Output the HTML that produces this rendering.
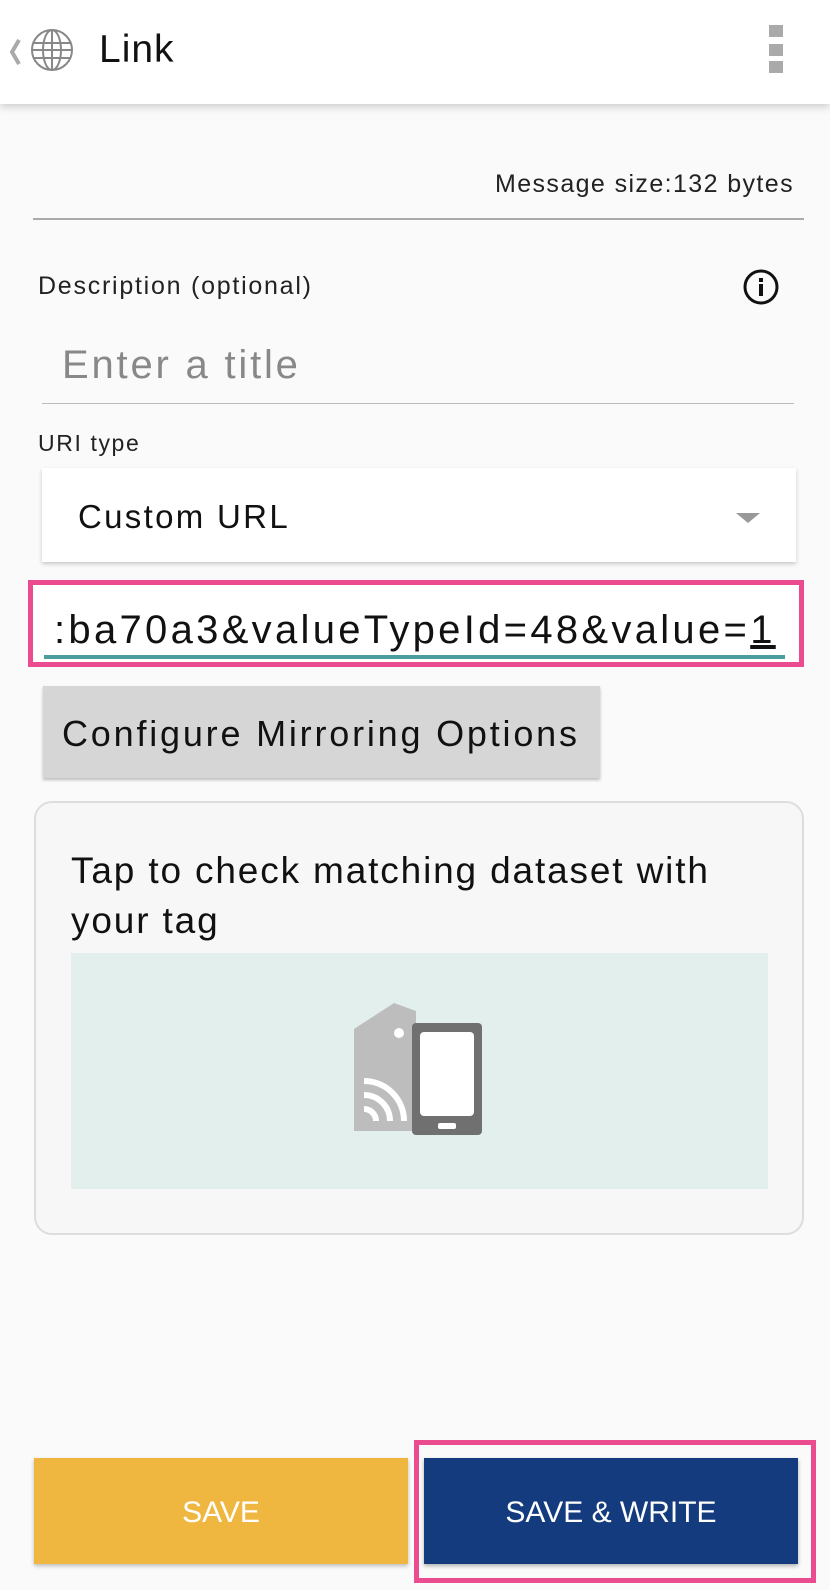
<!DOCTYPE html>
<html><head><style>
*{margin:0;padding:0;box-sizing:border-box}
body{width:830px;height:1590px;background:#fafafa;font-family:"Liberation Sans",sans-serif;position:relative;overflow:hidden;color:#1a1a1a}
.abs{position:absolute;white-space:nowrap}
.w{letter-spacing:0.07em}
</style></head><body>
<div class="abs" style="left:0;top:0;width:830px;height:104px;background:#fff;box-shadow:0 3px 8px rgba(0,0,0,0.18)"></div>
<svg class="abs" style="left:8px;top:38px" width="14" height="28" viewBox="0 0 14 28"><polyline points="11,2 4,14 11,26" fill="none" stroke="#aaa" stroke-width="4"/></svg>
<svg class="abs" style="left:30px;top:28px" width="44" height="44" viewBox="0 0 44 44" fill="none" stroke="#888" stroke-width="2"><circle cx="22" cy="22" r="20"/><ellipse cx="22" cy="22" rx="9" ry="20"/><line x1="22" y1="2" x2="22" y2="42"/><line x1="3" y1="15" x2="41" y2="15"/><line x1="2" y1="22" x2="42" y2="22"/><line x1="3" y1="30" x2="41" y2="30"/></svg>
<div class="abs" style="left:99px;top:28px;font-size:39px;color:#111;letter-spacing:1px">Link</div>
<div class="abs" style="left:769px;top:25px;width:14px;height:12px;background:#aaa"></div>
<div class="abs" style="left:769px;top:44px;width:14px;height:12px;background:#aaa"></div>
<div class="abs" style="left:769px;top:61px;width:14px;height:12px;background:#aaa"></div>

<div class="abs" style="right:36px;top:170px;font-size:25px;color:#222;letter-spacing:1.4px">Message size:132 bytes</div>
<div class="abs" style="left:33px;top:218px;width:771px;height:2px;background:#aaa"></div>

<div class="abs w" style="left:38px;top:272px;font-size:25px;color:#222">Description (optional)</div>
<svg class="abs" style="left:742px;top:268px" width="38" height="38" viewBox="0 0 38 38"><circle cx="19" cy="19" r="16" fill="none" stroke="#111" stroke-width="3"/><rect x="17" y="16" width="4" height="12" fill="#111"/><rect x="17" y="10" width="4" height="4" fill="#111"/></svg>
<div class="abs w" style="left:62px;top:343px;font-size:40px;color:#888">Enter a title</div>
<div class="abs" style="left:42px;top:403px;width:752px;height:1px;background:#bbb"></div>

<div class="abs w" style="left:38px;top:430px;font-size:23px;color:#222">URI type</div>
<div class="abs" style="left:42px;top:468px;width:754px;height:94px;background:#fff;box-shadow:0 2px 4px rgba(0,0,0,0.2)"></div>
<div class="abs w" style="left:78px;top:498px;font-size:33px;color:#111">Custom URL</div>
<div class="abs" style="left:736px;top:513px;width:0;height:0;border-left:12px solid transparent;border-right:12px solid transparent;border-top:10px solid #999"></div>

<div class="abs" style="left:28px;top:580px;width:776px;height:87px;border:5px solid #ea4c8f;background:#fff"></div>
<div class="abs" style="left:54px;top:608px;font-size:40px;color:#111;letter-spacing:3.3px">:ba70a3&amp;valueTypeId=48&amp;value=<u>1</u></div>
<div class="abs" style="left:44px;top:655px;width:741px;height:4px;background:#4a9e9e"></div>

<div class="abs" style="left:43px;top:686px;width:557px;height:92px;background:#d6d6d6;box-shadow:0 2px 3px rgba(0,0,0,0.25)"></div>
<div class="abs" style="left:62px;top:713px;font-size:36px;color:#111;letter-spacing:2.8px">Configure Mirroring Options</div>

<div class="abs" style="left:34px;top:801px;width:770px;height:434px;border:2px solid #ddd;border-radius:18px;background:#f7f7f7"></div>
<div class="abs" style="left:71px;top:846px;font-size:37px;color:#111;line-height:50px;white-space:normal;width:700px;letter-spacing:0.05em">Tap to check matching dataset with your tag</div>
<div class="abs" style="left:71px;top:953px;width:697px;height:236px;background:#e2efec"></div>
<svg class="abs" style="left:354px;top:1001px" width="134" height="134" viewBox="0 0 134 134">
<path d="M0 28 L40 2 L62 10 L62 130 L0 130 Z" fill="#bdbdbd"/>
<circle cx="45" cy="32" r="5" fill="#fff"/>
<path d="M10 80 A40 40 0 0 1 50 120" fill="none" stroke="#fff" stroke-width="6"/>
<path d="M10 94 A26 26 0 0 1 36 120" fill="none" stroke="#fff" stroke-width="6"/>
<path d="M10 108 A12 12 0 0 1 22 120" fill="none" stroke="#fff" stroke-width="6"/>
<rect x="58" y="22" width="70" height="112" rx="4" fill="#707070"/>
<rect x="66" y="31" width="54" height="84" rx="4" fill="#fff"/>
<rect x="84" y="122" width="18" height="6" rx="2" fill="#fff"/>
</svg>

<div class="abs" style="left:34px;top:1458px;width:374px;height:106px;background:#efb740;box-shadow:0 2px 4px rgba(0,0,0,0.25)"></div>
<div class="abs" style="left:34px;top:1496px;width:374px;text-align:center;font-size:30px;color:#fff">SAVE</div>
<div class="abs" style="left:414px;top:1440px;width:402px;height:143px;border:5px solid #ea4c8f"></div>
<div class="abs" style="left:424px;top:1458px;width:374px;height:106px;background:#143b7e;box-shadow:0 2px 4px rgba(0,0,0,0.3)"></div>
<div class="abs" style="left:424px;top:1496px;width:374px;text-align:center;font-size:30px;color:#fff">SAVE &amp; WRITE</div>
</body></html>
